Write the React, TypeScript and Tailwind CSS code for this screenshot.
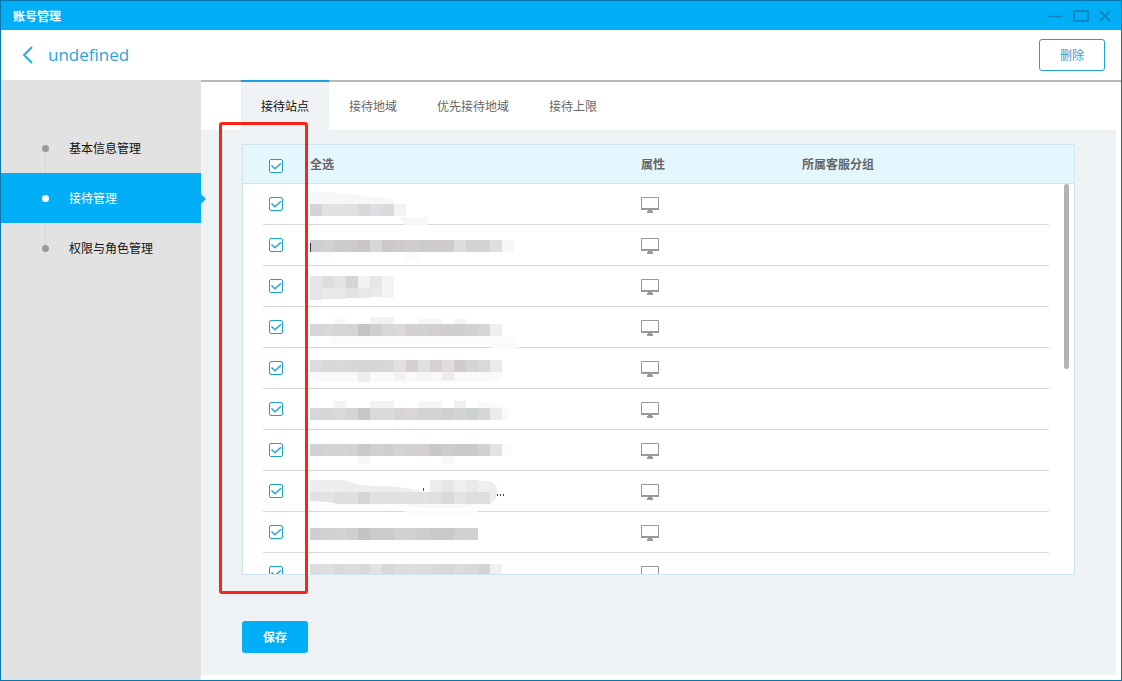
import { useState } from 'react';
import { clsx } from 'clsx';

interface Block {
    x: number;
    y: number;
    w: number;
    h?: number;
    fill: string;
}

interface Site {
    id: number;
    // one 12px block per colour, drawn from the left edge
    strip: string[];
    stripY: number;
    smudge?: string;
    smudgeFill?: string;
    extra?: Block[];
    dots?: boolean;
}

const MENU = ['基本信息管理', '接待管理', '权限与角色管理'];
const TABS = ['接待站点', '接待地域', '优先接待地域', '接待上限'];

const SITES: Site[] = [
    {
        id: 1,
        stripY: 20,
        strip: ['#d4d4d4', '#e2e2e2', '#e3e2e0', '#e0e0e2', '#d9d8d6', '#dedee2', '#dadbdc', '#f2f3f3'],
        smudge: 'M0 10Q4 7 14 8Q42 9 60 13Q84 12 86 20V21H0ZM90 33H118V41H94Z',
        smudgeFill: '#f6f7f7',
    },
    {
        id: 2,
        stripY: 15,
        strip: ['#cfcdcf', '#d1d0d2', '#cbcacd', '#cdc9cd', '#c9c6ca', '#d7d6d9', '#cdc9ca', '#cecacd', '#d1cdcf', '#cdcccd', '#cecccd', '#cfcbcd', '#dddcdf', '#d2d3d3', '#d2d5d4', '#dedee0', '#f7f7f7'],
        extra: [
            { x: 0, y: 18, w: 1, h: 9, fill: '#3c2440' },
            { x: 12, y: 27, w: 12, h: 5, fill: '#fafafa' },
            { x: 96, y: 27, w: 12, h: 8, fill: '#fafafa' },
        ],
    },
    {
        id: 3,
        stripY: 10,
        strip: ['#e6e6e7', '#dededf', '#e4e4e4', '#d5d5d5', '#f1f1f3', '#e5e6e6', '#f3f4f4'],
        extra: [
            { x: 0, y: 22, w: 12, fill: '#e5e5e6' },
            { x: 12, y: 22, w: 24, h: 11, fill: '#e9e9ea' },
            { x: 36, y: 22, w: 12, h: 10, fill: '#e2e2e3' },
            { x: 48, y: 22, w: 12, h: 10, fill: '#e8e8e9' },
            { x: 60, y: 22, w: 12, h: 9, fill: '#e9eaea' },
            { x: 72, y: 22, w: 12, h: 10, fill: '#f4f4f5' },
        ],
    },
    {
        id: 4,
        stripY: 17,
        strip: ['#d5d5d5', '#d8d8d8', '#d7d5d7', '#d4d3d5', '#c5c4c4', '#d0cfcf', '#d7d7d7', '#d9d9d9', '#d4cfd1', '#d0d3d3', '#d3cfd1', '#cfcfd0', '#cfcfd1', '#d0d2d2', '#d7d6d7', '#efeff0'],
        smudge: 'M20 29H196L208 31V42H184L172 36H20Z',
        smudgeFill: '#fbfbfb',
        extra: [
            { x: 24, y: 12, w: 12, h: 5, fill: '#f8f8f8' },
            { x: 60, y: 10, w: 24, h: 7, fill: '#f2f2f3' },
            { x: 108, y: 12, w: 24, h: 5, fill: '#f6f6f6' },
            { x: 144, y: 12, w: 12, h: 5, fill: '#f5f5f5' },
        ],
    },
    {
        id: 5,
        stripY: 12,
        strip: ['#dcdcdd', '#d8d7d9', '#d9d9da', '#d7d6d8', '#d5d4d6', '#d6d6d7', '#d7d7d8', '#e3dfe1', '#d6cfd2', '#e0e0e2', '#d6d0d3', '#dddcdf', '#d2cbce', '#d4d4d5', '#d9d9da', '#ebebec'],
        smudge: 'M0 24H192V30Q180 36 156 34H20Q4 34 0 29Z',
        smudgeFill: '#f9f9fa',
        extra: [
            { x: 48, y: 24, w: 12, h: 10, fill: '#ececee' },
            { x: 84, y: 24, w: 12, h: 8, fill: '#f3f1f3' },
            { x: 108, y: 24, w: 12, h: 8, fill: '#f4f4f5' },
            { x: 132, y: 24, w: 12, h: 8, fill: '#ececee' },
        ],
    },
    {
        id: 6,
        stripY: 19,
        strip: ['#d7d7d7', '#d6d5d7', '#d9d9da', '#d4d4d5', '#c7c6c7', '#dadadb', '#dbdadc', '#d8d3d5', '#d9d6d8', '#d4d3d4', '#d5d3d5', '#cfced0', '#d3d2d4', '#cdd0d0', '#d6d5d7', '#ebebec'],
        smudge: 'M168 12Q190 14 198 22V28L192 32V19H168Z',
        smudgeFill: '#f9f9f9',
        extra: [
            { x: 24, y: 12, w: 12, h: 7, fill: '#f3f3f3' },
            { x: 60, y: 12, w: 24, h: 7, fill: '#f2f2f3' },
            { x: 108, y: 12, w: 24, h: 7, fill: '#f5f5f6' },
            { x: 144, y: 12, w: 12, h: 7, fill: '#f1f0f1' },
        ],
    },
    {
        id: 7,
        stripY: 14,
        strip: ['#d1d1d2', '#d3d2d4', '#d4d4d5', '#d2d2d3', '#cbcacb', '#d1cfd1', '#cdd0d1', '#d6d2d4', '#d1d1d2', '#d3cfd1', '#c9c7ca', '#cccbcd', '#cac9cc', '#c8cacb', '#d1d0d2', '#e3e3e4'],
        extra: [
            { x: 48, y: 26, w: 12, h: 8, fill: '#f7f7f7' },
            { x: 132, y: 26, w: 12, h: 8, fill: '#f8f8f8' },
            { x: 192, y: 14, w: 10, fill: '#fbfbfb' },
        ],
    },
    {
        id: 8,
        stripY: 21,
        strip: ['#e1e1e2', '#e3e3e3', '#dededf', '#e0e0e0', '#d6d5d6', '#e1e1e2', '#e2e1e2', '#e2e0e1', '#e3e1e2', '#e2e2e2', '#e1dfe0', '#dad9da', '#e3e3e3', '#dddede', '#dedddf', '#f0f0f0'],
        smudge: 'M0 9H34Q46 14 64 15Q90 14 114 21H0Z',
        smudgeFill: '#ededee',
        extra: [
            { x: 120, y: 9, w: 12, fill: '#ececed' },
            { x: 132, y: 9, w: 12, fill: '#e7e7e8' },
            { x: 144, y: 9, w: 12, fill: '#efefef' },
            { x: 156, y: 9, w: 12, fill: '#e9e9ea' },
            { x: 168, y: 10, w: 12, h: 11, fill: '#efeff0' },
            { x: 113, y: 17, w: 1, h: 3, fill: '#555555' },
        ],
        dots: true,
    },
    {
        id: 9,
        stripY: 16,
        strip: ['#d0cfd0', '#d2d1d2', '#d3d3d3', '#cfcfd0', '#c4c3c4', '#cccacb', '#c9cbcd', '#d4cfd0', '#d0cfd1', '#cfcdcf', '#c8cbcc', '#c9c8cb', '#d0cfd1', '#d1d1d3'],
    },
    {
        id: 10,
        stripY: 11,
        strip: ['#dcdcdd', '#dfdfe0', '#dadadb', '#dcdcdd', '#d9d9da', '#e2e2e3', '#d8d7d9', '#dcdcdd', '#dededf', '#dcdcdd', '#dadadb', '#d8d8d9', '#dcdcdd', '#d9d9da', '#d4d4d5', '#f0f0f1'],
    },
];

interface CheckBoxProps {
    id: string;
    label?: string;
    checked: boolean;
    onChange: () => void;
}

function CheckBox({ id, label, checked, onChange }: CheckBoxProps) {
    return (
        <span className="relative block size-[14px]">
            <input
                id={id}
                type="checkbox"
                aria-label={label}
                checked={checked}
                onChange={onChange}
                className="peer block size-[14px] appearance-none rounded-[2px] border border-[#1ba3c6] bg-white"
            />
            <svg
                viewBox="0 0 14 14"
                className="pointer-events-none absolute inset-0 hidden size-[14px] peer-checked:block"
                fill="none"
                stroke="#20a8d0"
                strokeWidth="1.5"
            >
                <path d="M2.5 6.5L6 9.8L12 4.2" />
            </svg>
        </span>
    );
}

function MaskedName({ site }: { site: Site }) {
    return (
        <svg width="210" height="40" viewBox="0 0 210 40" className="block overflow-visible" aria-hidden="true">
            {site.smudge && <path d={site.smudge} fill={site.smudgeFill} />}
            {site.strip.map((fill, i) => (
                <rect key={i} x={i * 12} y={site.stripY} width="12" height="12" fill={fill} />
            ))}
            {site.extra?.map((b, i) => (
                <rect key={i} x={b.x} y={b.y} width={b.w} height={b.h ?? 12} fill={b.fill} />
            ))}
            {site.dots && (
                <>
                    <path d="M0 30Q18 30 32 34H0Z" fill="#ffffff" />
                    <path d="M94 33H170Q150 39 124 37Q100 37 94 33ZM94 40H168V42H100Z" fill="#f9f9f9" />
                    <path d="M180 33L186 27L187 19L182 11L180 9H193V33Z" fill="#ffffff" />
                    <path d="M180 10Q189 15 187 23Q185 30 180 33Z" fill="#ededee" />
                    <path d="M187 23h1v2h-1zM190 23h1v2h-1zM193 23h1v2h-1z" fill="#444444" />
                </>
            )}
        </svg>
    );
}

function MonitorIcon() {
    return (
        <svg width="19" height="17" viewBox="0 0 19 17" className="block" role="img" aria-label="PC">
            <path d="M0.5 0.5H17.5V12.5H0.5Z" fill="#ffffff" stroke="#999999" />
            <path d="M0 11H18V13H0ZM7 13H11V14H12V16H6V14H7Z" fill="#999999" />
        </svg>
    );
}

function TitleBar() {
    return (
        <div className="flex h-[29px] items-center justify-between bg-[#02aef5] pr-2 pl-3">
            <h1 className="text-xs font-bold text-white">账号管理</h1>
            <div className="flex items-center gap-2 text-[#0c86c4]">
                <button type="button" aria-label="最小化" className="flex size-5 items-center justify-center">
                    <svg width="16" height="16" viewBox="0 0 16 16" stroke="currentColor" strokeWidth="1.5">
                        <path d="M1 8.5H16" />
                    </svg>
                </button>
                <button type="button" aria-label="最大化" className="flex size-4 items-center justify-center">
                    <svg width="16" height="16" viewBox="0 0 16 16" fill="none" stroke="currentColor" strokeWidth="2">
                        <path d="M1 3H15V13H1Z" />
                    </svg>
                </button>
                <button type="button" aria-label="关闭" className="flex size-4 items-center justify-center">
                    <svg width="12" height="12" viewBox="0 0 12 12" stroke="currentColor" strokeWidth="1.8">
                        <path d="M1 1L11 11M11 1L1 11" />
                    </svg>
                </button>
            </div>
        </div>
    );
}

function Sidebar() {
    const [active, setActive] = useState(1);

    return (
        <nav className="w-[200px] shrink-0 bg-[#e2e2e2] pt-[43px]">
            {MENU.map((item, i) => (
                <button
                    key={item}
                    type="button"
                    onClick={() => setActive(i)}
                    className={clsx(
                        'relative flex h-[50px] w-full items-center pl-[41px] text-left text-xs',
                        active === i ? 'bg-[#02aef5] text-white' : 'text-[#111111]',
                    )}
                >
                    {active !== i && (
                        <span
                            className={clsx(
                                'absolute left-11 h-6 w-px bg-[#d6d6d6]',
                                i < active ? 'bottom-0' : 'top-0',
                            )}
                        />
                    )}
                    <span
                        className={clsx('relative mr-5 size-[7px] rounded-full', active === i ? 'bg-white' : 'bg-[#9a9a9a]')}
                    />
                    {item}
                    {active === i && (
                        <svg width="5" height="10" viewBox="0 0 5 10" className="absolute top-[21px] left-full">
                            <path d="M0 0L5 5L0 10Z" fill="#1ba9ea" />
                        </svg>
                    )}
                </button>
            ))}
        </nav>
    );
}

function SiteTable() {
    const [selected, setSelected] = useState<number[]>(SITES.map((s) => s.id));
    const allSelected = selected.length === SITES.length;

    const toggle = (id: number) => {
        setSelected((prev) => (prev.includes(id) ? prev.filter((v) => v !== id) : [...prev, id]));
    };

    return (
        <div className="relative">
            <div className="h-[431px] overflow-hidden border border-[#cfe5ee] bg-white">
                <table className="w-full table-fixed border-separate border-spacing-0 text-left text-xs">
                    <colgroup>
                        <col className="w-5" />
                        <col className="w-[47px]" />
                        <col className="w-[331px]" />
                        <col className="w-[161px]" />
                        <col />
                        <col className="w-[25px]" />
                    </colgroup>
                    <thead>
                        <tr className="h-[39px] bg-[#e5f7fe] text-[#666666] [&>*]:border-b [&>*]:border-[#cfe5ee] [&>*]:p-0">
                            <td />
                            <td>
                                <div className="pt-1 pl-[6px]">
                                    <CheckBox
                                        id="select-all"
                                        checked={allSelected}
                                        onChange={() => setSelected(allSelected ? [] : SITES.map((s) => s.id))}
                                    />
                                </div>
                            </td>
                            <th scope="col">
                                <label htmlFor="select-all">全选</label>
                            </th>
                            <th scope="col">属性</th>
                            <th scope="col">所属客服分组</th>
                            <td />
                        </tr>
                    </thead>
                    <tbody>
                        {SITES.map((site) => (
                            <tr key={site.id} className="[&>td]:p-0">
                                <td />
                                <td className="border-b border-[#d9d9d9]">
                                    <div className="pl-[6px]">
                                        <CheckBox
                                            id={`site-${site.id}`}
                                            label={`站点 ${site.id}`}
                                            checked={selected.includes(site.id)}
                                            onChange={() => toggle(site.id)}
                                        />
                                    </div>
                                </td>
                                <td className="border-b border-[#d9d9d9]">
                                    <MaskedName site={site} />
                                </td>
                                <td className="border-b border-[#d9d9d9]">
                                    <div className="pt-[3px]">
                                        <MonitorIcon />
                                    </div>
                                </td>
                                <td className="border-b border-[#d9d9d9]" />
                                <td />
                            </tr>
                        ))}
                    </tbody>
                </table>
            </div>
            {/* scrollbar thumb */}
            <div className="absolute top-10 right-[6px] h-[185px] w-[5px] rounded-full bg-[#b3b3b3]" />
            {/* highlight around the checkbox column */}
            <div className="pointer-events-none absolute -top-[22px] -left-[23px] h-[472px] w-[89px] rounded-[3px] border-3 border-[#fb2419]" />
        </div>
    );
}

export default function App() {
    const [tab, setTab] = useState(0);

    return (
        <div className="flex min-h-screen flex-col border border-[#0a77ad] bg-white font-['Noto_Sans_CJK_SC',sans-serif]">
            <TitleBar />

            <header className="flex h-[50px] items-center justify-between pr-4 pl-5">
                <div className="flex items-center gap-[14px]">
                    <button type="button" aria-label="返回">
                        <svg width="13" height="18" viewBox="0 0 13 18" fill="none" stroke="#1fa6e6" strokeWidth="1.8">
                            <path d="M11 1L3 9L11 17" />
                        </svg>
                    </button>
                    <h2 className="font-['Open_Sans','Noto_Sans_CJK_SC',sans-serif] text-[17px] text-[#2ba3dc]">undefined</h2>
                </div>
                <button
                    type="button"
                    className="h-8 w-[66px] rounded-[3px] border border-[#1fa0dc] text-xs text-[#1fa0dc]"
                >
                    删除
                </button>
            </header>

            <div className="flex flex-1">
                <Sidebar />

                <main className="flex min-w-0 flex-1 flex-col pb-[5px]">
                    <div className="flex h-[50px] pl-10 shadow-[inset_0_2px_0_#b8b8b8]">
                        {TABS.map((item, i) => (
                            <button
                                key={item}
                                type="button"
                                onClick={() => setTab(i)}
                                className={clsx(
                                    'border-t-2 px-5 text-xs',
                                    tab === i
                                        ? 'border-[#1a9fe0] bg-[#eef2f5] text-[#111111]'
                                        : 'border-transparent text-[#666666]',
                                )}
                            >
                                {item}
                            </button>
                        ))}
                    </div>

                    <div className="mr-[5px] flex-1 bg-[#eef2f5] pt-[14px] pr-[41px] pl-[41px]">
                        <SiteTable />
                        <button
                            type="button"
                            className="mt-[46px] h-8 w-[66px] rounded-[3px] bg-[#02aef5] text-xs font-bold text-white"
                        >
                            保存
                        </button>
                    </div>
                </main>
            </div>
        </div>
    );
}
